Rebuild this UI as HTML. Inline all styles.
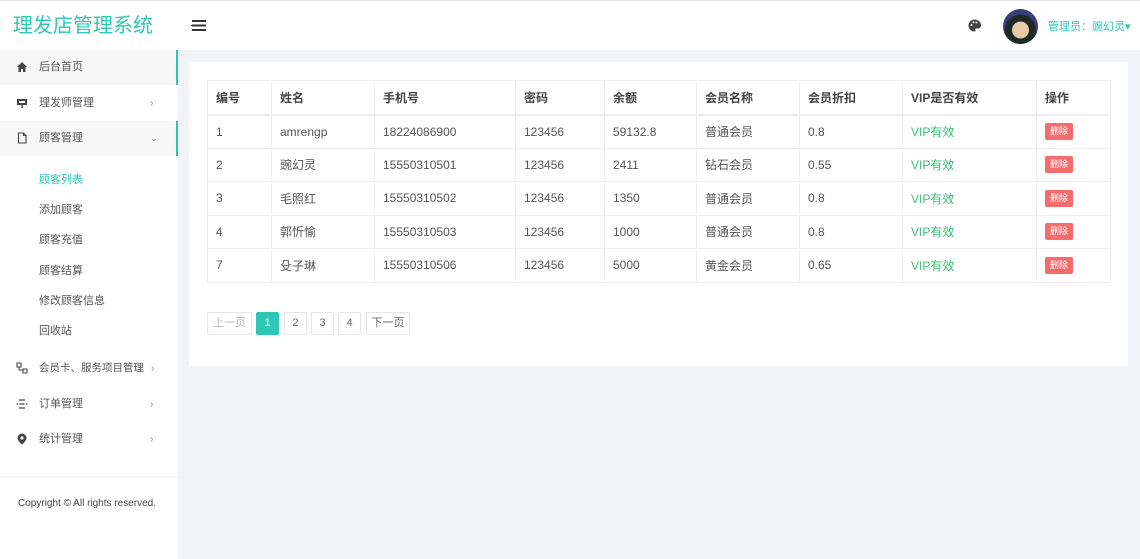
<!DOCTYPE html>
<html><head><meta charset="utf-8"><style>
*{box-sizing:border-box;margin:0;padding:0}
body{width:1140px;height:559px;overflow:hidden;background:#f2f3f7;font-family:"Liberation Sans","Noto Sans CJK SC",sans-serif;font-size:12px;color:#555;position:relative}
.side{position:absolute;left:0;top:0;width:178px;height:559px;background:#fff;border-top:1px solid #e6e6e6}
.logo{height:49px;line-height:50px;padding-left:13px;font-size:20px;color:#2ec7b5}
.mi{position:absolute;left:0;width:178px;height:35px;line-height:35px;padding-left:39px;color:#555;font-size:11px}
.mi.act{background:#f7f7f7;border-right:2px solid #2ec7b5}
.mi svg{position:absolute;left:16px;top:11px}
.mi .ar{position:absolute;left:150px;top:0;font-size:10px;color:#888}
.sub{position:absolute;left:39px;font-size:11px;color:#555}
.hdr{position:absolute;left:178px;top:0;right:0;height:50px;background:#fff;border-top:1px solid #e6e6e6}
.card{position:absolute;left:189px;top:62px;width:939px;height:304px;background:#fff}
table{position:absolute;left:18px;top:18px;border-collapse:collapse;width:904px}
td,th{border:1px solid #eee;height:33.5px;padding-left:8px;text-align:left;font-size:12px;color:#555;font-weight:normal}
th{font-weight:bold;color:#444;height:34px}
tr:first-child th{border-bottom:2px solid #eee}
.vip{color:#3bc077}
.del{display:inline-block;background:#f56c6c;color:#fff;font-size:9px;padding:0 5px;height:17px;line-height:17px;border-radius:2px}
.pg{position:absolute;top:250px;height:23px;line-height:21px;border:1px solid #e6e6e6;text-align:center;color:#666;font-size:11px;border-radius:2px}
</style></head><body>
<div class="side">
<div class="logo">理发店管理系统</div>
<div class="mi act" style="top:49px"><svg width="12" height="12" viewBox="0 0 12 12"><path d="M6 1L1 6h1.5v5h2.5V8h2v3h2.5V6H11z" fill="#444"/></svg>后台首页</div>
<div class="mi" style="top:85px"><svg width="12" height="12" viewBox="0 0 12 12"><path d="M1 2h10v6H1z M3 4h6v2H3z" fill="#444" fill-rule="evenodd"/><path d="M5.3 8h1.4v3H5.3z" fill="#444"/></svg>理发师管理<span class="ar">›</span></div>
<div class="mi act" style="top:120px"><svg width="12" height="12" viewBox="0 0 12 12"><path d="M2.5 1h5l2.5 2.5V11h-7.5z M7.5 1v2.5H10" fill="none" stroke="#444" stroke-width="1.1"/></svg>顾客管理<span class="ar" style="font-size:9px">⌄</span></div>
<div class="sub" style="top:170px;color:#2ec7b5">顾客列表</div>
<div class="sub" style="top:200px">添加顾客</div>
<div class="sub" style="top:230px">顾客充值</div>
<div class="sub" style="top:261px">顾客结算</div>
<div class="sub" style="top:291px">修改顾客信息</div>
<div class="sub" style="top:321px">回收站</div>
<div class="mi" style="top:350px;font-size:10.5px"><svg width="12" height="12" viewBox="0 0 12 12"><path d="M1 1h4v4H1z M7 7h4v4H7z" fill="none" stroke="#444" stroke-width="1.1"/><path d="M3 5v3h4" fill="none" stroke="#444"/></svg>会员卡、服务项目管理<span class="ar" style="left:151px">›</span></div>
<div class="mi" style="top:386px"><svg width="12" height="12" viewBox="0 0 12 12"><path d="M3 2h6M3.5 6h5M3 10h6M0.5 6h1.5M10 6h1.5" stroke="#444" stroke-width="1.2"/></svg>订单管理<span class="ar">›</span></div>
<div class="mi" style="top:421px"><svg width="12" height="12" viewBox="0 0 12 12"><path d="M6 0.5a4.5 4.5 0 0 1 4.5 4.5c0 3-4.5 6.5-4.5 6.5S1.5 8 1.5 5A4.5 4.5 0 0 1 6 .5z" fill="#444"/><circle cx="6" cy="5" r="1.6" fill="#fff"/></svg>统计管理<span class="ar">›</span></div>
<div style="position:absolute;top:475px;left:0;width:178px;border-top:1px solid #f0f0f0"></div>
<div style="position:absolute;top:497px;left:18px;font-size:10px;color:#444">Copyright © All rights reserved.</div>
</div>
<div class="hdr">
<div style="position:absolute;left:14px;top:19px;width:14px;height:1.5px;background:#333;box-shadow:0 4.5px 0 #333,0 9px 0 #333"></div>
<div style="position:absolute;left:12px;top:23.5px;width:10px;height:1.5px;background:#fff"></div>
<div style="position:absolute;left:13px;top:23.5px;width:9px;height:1.5px;background:#333"></div>
<svg style="position:absolute;left:790px;top:18px" width="13" height="13" viewBox="0 0 13 13"><path d="M6.5 0.5a6 6 0 0 0 0 12c1 0 1.3-.7.9-1.4-.4-.8 0-1.6 1-1.6h1.6c1.7 0 3-1.3 3-3C13 3 10.2.5 6.5.5z" fill="#444"/><circle cx="3.5" cy="6" r="1" fill="#fff"/><circle cx="5.5" cy="3.3" r="1" fill="#fff"/><circle cx="8.5" cy="3.5" r="1" fill="#fff"/></svg>
<div style="position:absolute;left:825px;top:8px;width:35px;height:35px;border-radius:50%;background:radial-gradient(circle at 50% 60%,#e8c9a8 0 30%,#1e2a26 32% 55%,#3a3f7a 58%)"></div>
<div style="position:absolute;left:870px;top:17px;font-size:11px;color:#2ec7b5">管理员：豌幻灵▾</div>
</div>
<div class="card">
<table>
<tr><th style="width:64px">编号</th><th style="width:103px">姓名</th><th style="width:141px">手机号</th><th style="width:89px">密码</th><th style="width:92px">余额</th><th style="width:103px">会员名称</th><th style="width:103px">会员折扣</th><th style="width:134px">VIP是否有效</th><th>操作</th></tr>
<tr><td>1</td><td>amrengp</td><td>18224086900</td><td>123456</td><td>59132.8</td><td>普通会员</td><td>0.8</td><td class="vip">VIP有效</td><td><span class="del">删除</span></td></tr>
<tr><td>2</td><td>豌幻灵</td><td>15550310501</td><td>123456</td><td>2411</td><td>钻石会员</td><td>0.55</td><td class="vip">VIP有效</td><td><span class="del">删除</span></td></tr>
<tr><td>3</td><td>毛照红</td><td>15550310502</td><td>123456</td><td>1350</td><td>普通会员</td><td>0.8</td><td class="vip">VIP有效</td><td><span class="del">删除</span></td></tr>
<tr><td>4</td><td>郭忻愉</td><td>15550310503</td><td>123456</td><td>1000</td><td>普通会员</td><td>0.8</td><td class="vip">VIP有效</td><td><span class="del">删除</span></td></tr>
<tr><td>7</td><td>殳子琳</td><td>15550310506</td><td>123456</td><td>5000</td><td>黄金会员</td><td>0.65</td><td class="vip">VIP有效</td><td><span class="del">删除</span></td></tr>
</table>
<div class="pg" style="left:18px;width:45px;color:#bbb">上一页</div>
<div class="pg" style="left:67px;width:23px;background:#2ec7b5;border-color:#2ec7b5;color:#fff">1</div>
<div class="pg" style="left:95px;width:23px">2</div>
<div class="pg" style="left:122px;width:23px">3</div>
<div class="pg" style="left:149px;width:23px">4</div>
<div class="pg" style="left:177px;width:44px">下一页</div>
</div>
</body></html>
